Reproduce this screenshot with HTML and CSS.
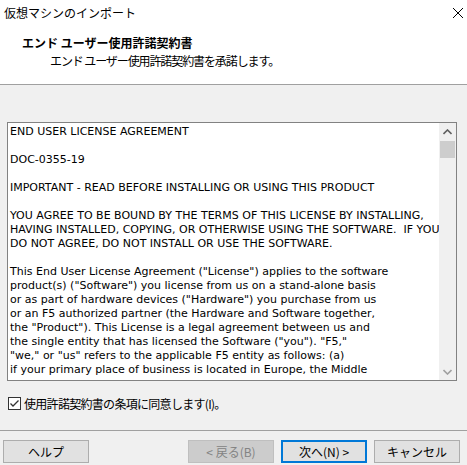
FILE: index.html
```html
<!DOCTYPE html>
<html lang="ja">
<head>
<meta charset="utf-8">
<title>仮想マシンのインポート</title>
<link rel="stylesheet" href="styles.css">
</head>
<body>
<div class="dialog">
  <div class="top">
    <div class="titlebar">
      <span class="title">仮想マシンのインポート</span>
      <svg class="close" width="12" height="12" viewBox="0 0 12 12"><path d="M1 1 L11 11 M11 1 L1 11" stroke="#000" stroke-width="1" fill="none"/></svg>
    </div>
    <div class="header">
      <div class="heading">エンド ユーザー使用許諾契約書</div>
      <div class="subheading">エンド ユーザー使用許諾契約書を承諾します。</div>
    </div>
  </div>
  <div class="main">
    <div class="textbox">
      <div class="text">END USER LICENSE AGREEMENT

DOC-0355-19

IMPORTANT - READ BEFORE INSTALLING OR USING THIS PRODUCT

YOU AGREE TO BE BOUND BY THE TERMS OF THIS LICENSE BY INSTALLING,
HAVING INSTALLED, COPYING, OR OTHERWISE USING THE SOFTWARE.  IF YOU
DO NOT AGREE, DO NOT INSTALL OR USE THE SOFTWARE.

This End User License Agreement ("License") applies to the software
product(s) ("Software") you license from us on a stand-alone basis
or as part of hardware devices ("Hardware") you purchase from us
or an F5 authorized partner (the Hardware and Software together,
the "Product"). This License is a legal agreement between us and
the single entity that has licensed the Software ("you"). "F5,"
"we," or "us" refers to the applicable F5 entity as follows: (a)
if your primary place of business is located in Europe, the Middle</div>
      <div class="scrollbar">
        <div class="arrow">
          <svg width="9" height="6" viewBox="0 0 9 6"><path d="M0.5 5 L4.5 1 L8.5 5" stroke="#606060" stroke-width="1.6" fill="none"/></svg>
        </div>
        <div class="thumb"></div>
        <div class="track"></div>
        <div class="arrow">
          <svg width="9" height="6" viewBox="0 0 9 6"><path d="M0.5 1 L4.5 5 L8.5 1" stroke="#a0a0a0" stroke-width="1.6" fill="none"/></svg>
        </div>
      </div>
    </div>
    <label class="agree">
      <span class="checkbox">
        <svg width="11" height="11" viewBox="0 0 11 11"><path d="M1.5 5.5 L4 8 L9.5 2.5" stroke="#333" stroke-width="1.3" fill="none"/></svg>
      </span>
      <span class="agree-text">使用許諾契約書の条項に同意します(I)。</span>
    </label>
  </div>
  <div class="footer">
    <div class="btn">ヘルプ</div>
    <div class="btn disabled push">&lt; 戻る(B)</div>
    <div class="btn default">次へ(N) &gt;</div>
    <div class="btn">キャンセル</div>
  </div>
</div>
</body>
</html>
```
FILE: styles.css
```css
html, body {
  margin: 0;
  padding: 0;
}
body {
  width: 467px;
  height: 465px;
  overflow: hidden;
  background: #f0f0f0;
  font-family: "Noto Sans CJK JP", "Liberation Sans", sans-serif;
  font-size: 12px;
  color: #000;
}
.dialog {
  display: flex;
  flex-direction: column;
  height: 465px;
}
.top {
  background: #fff;
  height: 84px;
  border-bottom: 1px solid #a0a0a0;
}
.titlebar {
  height: 26px;
  display: flex;
  align-items: center;
  justify-content: space-between;
  padding: 0 3px 0 4px;
}
.title {
  font-size: 12px;
  line-height: 16px;
}
.close {
  display: block;
}
.header {
  padding: 9px 0 0 22px;
}
.heading {
  font-weight: bold;
  font-size: 12px;
  line-height: 16px;
}
.subheading {
  font-size: 12px;
  line-height: 16px;
  letter-spacing: -1.1px;
  margin: 2px 0 0 28px;
}
.main {
  padding: 37px 0 0 7px;
}
.textbox {
  width: 450px;
  height: 259px;
  box-sizing: border-box;
  border: 1px solid #828282;
  background: #fff;
  display: flex;
}
.text {
  flex: 1;
  overflow: hidden;
  white-space: pre;
  padding: 2px 0 0 2px;
  font-family: "DejaVu Sans", "Liberation Sans", sans-serif;
  font-size: 11px;
  line-height: 14px;
  color: #000;
}
.scrollbar {
  width: 17px;
  flex: none;
  background: #f0f0f0;
  display: flex;
  flex-direction: column;
}
.arrow {
  height: 17px;
  display: flex;
  align-items: center;
  justify-content: center;
}
.thumb {
  height: 17px;
  margin: 1px 1px 0;
  background: #cdcdcd;
}
.track {
  flex: 1;
}
.agree {
  display: flex;
  align-items: center;
  gap: 3px;
  margin-top: 16px;
  margin-left: 1px;
  height: 13px;
}
.checkbox {
  width: 13px;
  height: 13px;
  box-sizing: border-box;
  border: 1px solid #333;
  background: #fff;
  display: flex;
  align-items: center;
  justify-content: center;
}
.checkbox svg {
  display: block;
}
.agree-text {
  font-size: 12px;
  line-height: 16px;
  letter-spacing: -0.7px;
}
.footer {
  margin-top: 20px;
  border-top: 1px solid #a0a0a0;
  padding: 9px 7px 0 3px;
  display: flex;
  gap: 7px;
}
.btn {
  width: 86px;
  height: 23px;
  box-sizing: border-box;
  border: 1px solid #adadad;
  background: #e1e1e1;
  display: flex;
  align-items: center;
  justify-content: center;
  font-size: 12px;
  line-height: 16px;
}
.push {
  margin-left: auto;
}
.disabled {
  background: #cccccc;
  border-color: #bfbfbf;
  color: #838383;
}
.default {
  border: 2px solid #0078d7;
}
```
